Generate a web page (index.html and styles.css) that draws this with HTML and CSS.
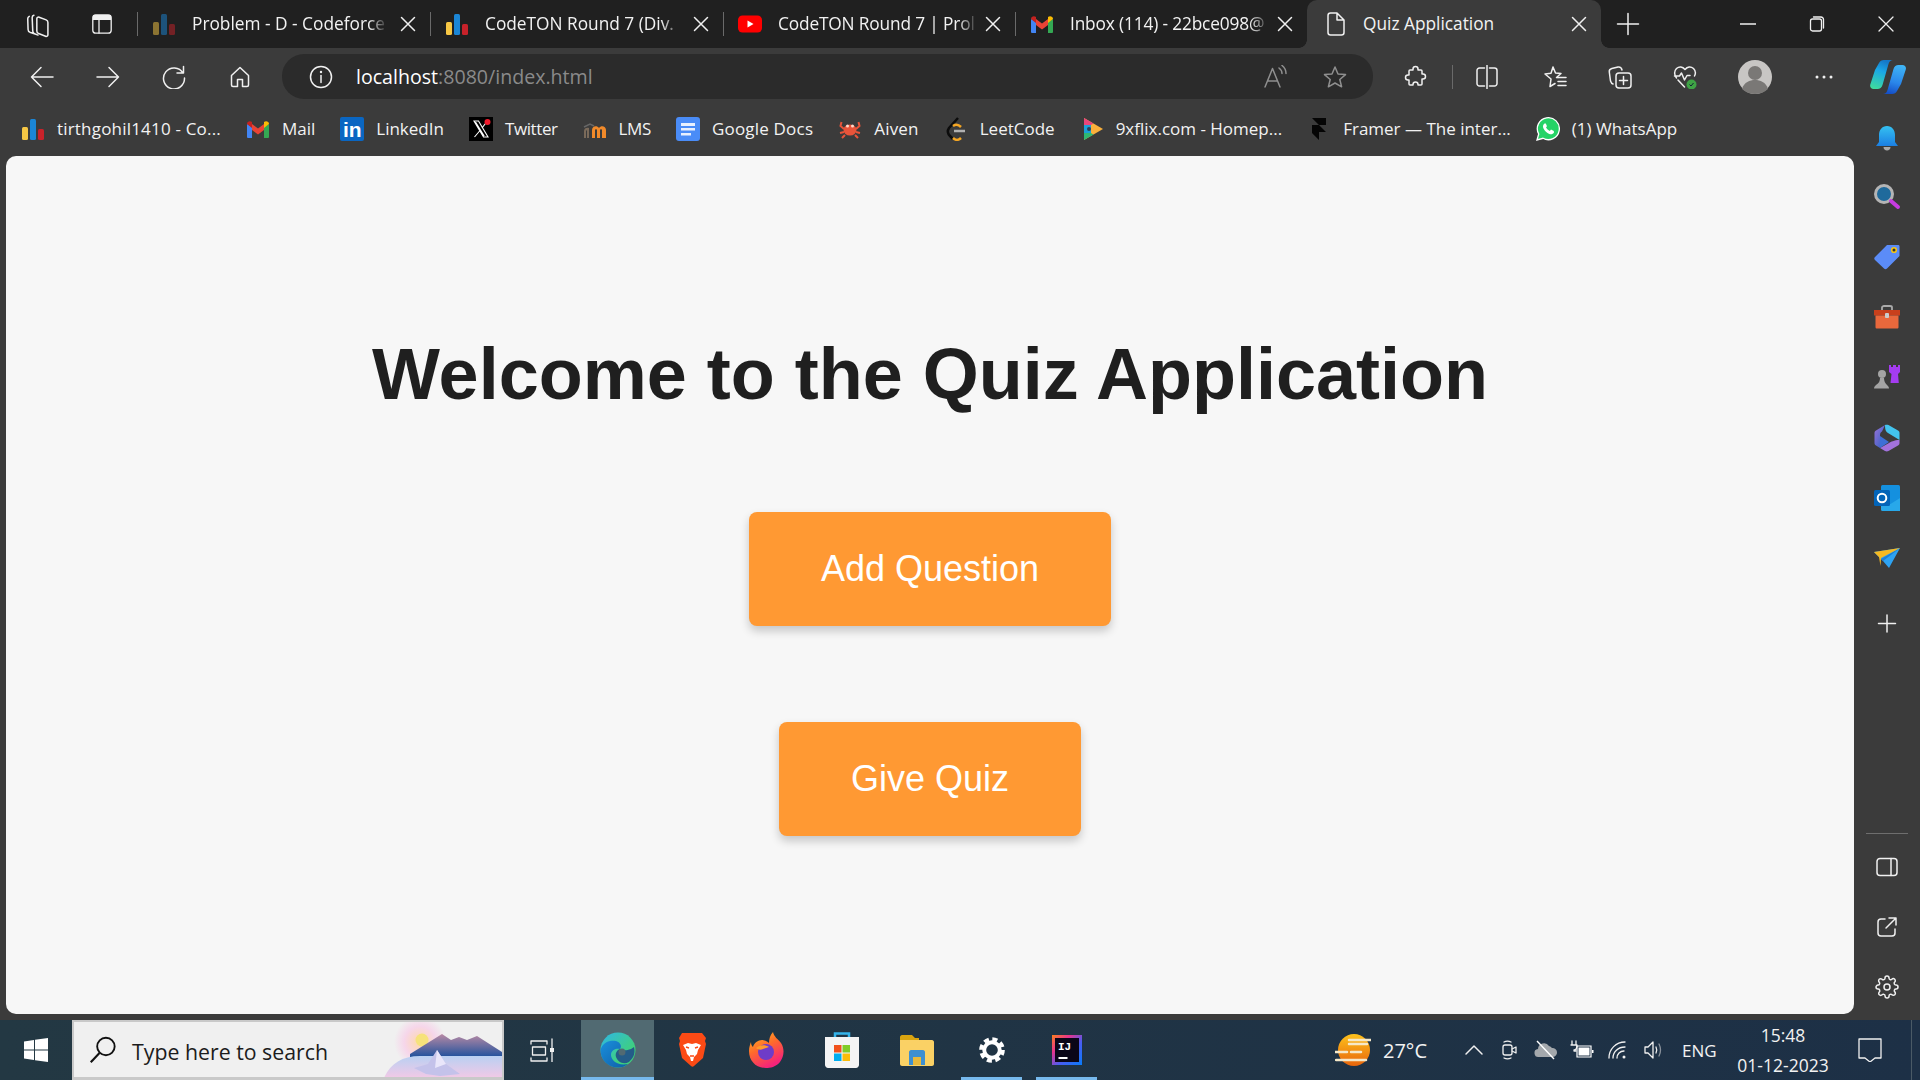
FILE: index.html
```html
<!DOCTYPE html>
<html lang="en">
<head>
<meta charset="utf-8">
<title>Quiz Application</title>
<link rel="stylesheet" href="styles.css">
</head>
<body>
<svg class="defs" aria-hidden="true">
  <defs>
    <symbol id="chart" viewBox="0 0 24 24"><rect x="1" y="10" width="6" height="13" rx="1.500" fill="#f7c744"/><rect x="9" y="2" width="6" height="21" rx="1.500" fill="#1b86d6"/><rect x="17" y="12" width="6" height="11" rx="1.500" fill="#c8222a"/></symbol>
    <symbol id="close" viewBox="0 0 24 24"><path class="line" d="M5.500 5.500l13 13M18.500 5.500l-13 13"/></symbol>
    <symbol id="gmail" viewBox="0 0 24 24"><path d="M1 7v13a1 1 0 0 0 1 1h4V10z" fill="#4285f4"/><path d="M23 7v13a1 1 0 0 1-1 1h-4V10z" fill="#34a853"/><path d="M6 13V7l6 4.500L18 7v6l-6 4.500z" fill="#ea4335"/><path d="M1 7c0-2.500 3-3.500 5-2v6L1 7z" fill="#c5221f"/><path d="M23 7c0-2.500-3-3.500-5-2v6l5-4z" fill="#fbbc04"/></symbol>
  </defs>
</svg>

<div class="tabbar">
  <div class="tab-tools">
    <span class="slot-64"><svg class="ic-l" viewBox="0 0 24 24"><path class="line thin" d="M9.500 20.500L5 19c-1-.4-1.500-1.200-1.500-2.200L3.200 7.500c0-1 .5-1.500 1.300-2M12 21.500l-3-1.200c-1-.4-1.500-1.200-1.500-2.200L7 6.500c0-1 .5-1.700 1.500-2"/><path class="line thin" d="M11 7.500c0-1 1-1.700 2-1.300l6 2.300c1 .4 1.500 1.200 1.500 2.200v10.500c0 1-1 1.700-2 1.300l-6-2.300c-1-.4-1.500-1.200-1.500-2.200z"/></svg></span>
    <span class="slot-64"><svg class="ic" viewBox="0 0 24 24"><rect class="line thin" x="2.800" y="2.800" width="18.400" height="18.400" rx="3"/><path class="solid" d="M3 3h18v5H3z"/><path class="line thin" d="M9 8v13"/></svg></span>
  </div>
  <div class="tab dim">
    <svg class="favicon" viewBox="0 0 24 24"><use href="#chart"/></svg>
    <span class="tab-title">Problem - D - Codeforce</span>
    <svg class="tab-close" viewBox="0 0 24 24"><use href="#close"/></svg>
  </div>
  <div class="tab">
    <svg class="favicon" viewBox="0 0 24 24"><use href="#chart"/></svg>
    <span class="tab-title">CodeTON Round 7 (Div.</span>
    <svg class="tab-close" viewBox="0 0 24 24"><use href="#close"/></svg>
  </div>
  <div class="tab narrow">
    <svg class="favicon" viewBox="0 0 24 24"><rect y="3.500" width="24" height="17" rx="4.500" fill="#f00"/><path d="M9.500 8.500v7l6-3.500z" fill="#fff"/></svg>
    <span class="tab-title">CodeTON Round 7 | Prol</span>
    <svg class="tab-close" viewBox="0 0 24 24"><use href="#close"/></svg>
  </div>
  <div class="tab narrow">
    <svg class="favicon" viewBox="0 0 24 24"><use href="#gmail"/></svg>
    <span class="tab-title">Inbox (114) - 22bce098@</span>
    <svg class="tab-close" viewBox="0 0 24 24"><use href="#close"/></svg>
  </div>
  <div class="tab active">
    <svg class="favicon" viewBox="0 0 24 24"><path class="line" d="M4 3.500a2.500 2.500 0 0 1 2.500-2.500H13l7 7v12.500a2.500 2.500 0 0 1-2.500 2.500h-11A2.500 2.500 0 0 1 4 20.500zM13 1v7h7"/></svg>
    <span class="tab-title">Quiz Application</span>
    <svg class="tab-close" viewBox="0 0 24 24"><use href="#close"/></svg>
  </div>
  <span class="new-tab"><svg class="ic" viewBox="0 0 24 24"><path class="line" d="M12 1.500v21M1.500 12h21"/></svg></span>
  <div class="win-controls">
    <span class="win-btn"><svg class="win-ic" viewBox="0 0 16 16"><path class="line thin" d="M0 8h16"/></svg></span>
    <span class="win-btn"><svg class="win-ic" viewBox="0 0 16 16"><rect class="line thin" x="1.500" y="3" width="11" height="12" rx="2"/><path class="line thin" d="M4.500 1H12a2.500 2.500 0 0 1 2.500 2.500V12"/></svg></span>
    <span class="win-btn"><svg class="win-ic" viewBox="0 0 16 16"><path class="line thin" d="M1 1l14 14M15 1L1 15"/></svg></span>
  </div>
</div>

<div class="toolbar">
  <div class="nav-tools">
    <span class="tool"><svg class="ic" viewBox="0 0 24 24"><path class="line" d="M23 12H1.500M11 2.500L1.500 12l9.500 9.500"/></svg></span>
    <span class="tool"><svg class="ic" viewBox="0 0 24 24"><path class="line" d="M1 12h21.500M13 2.500l9.500 9.500-9.500 9.500"/></svg></span>
    <span class="tool"><svg class="ic" viewBox="0 0 24 24"><path class="line" d="M21 8a10.500 10.500 0 1 0 1.500 5M21.500 1.500V8H15"/></svg></span>
    <span class="tool"><svg class="ic" viewBox="0 0 24 24"><path class="line" d="M9.500 21.500H5a1.500 1.500 0 0 1-1.500-1.500v-9.500L12 2.500l8.500 8V20a1.500 1.500 0 0 1-1.500 1.500h-4.500v-7h-5z"/></svg></span>
  </div>
  <div class="address">
    <svg class="ic" viewBox="0 0 24 24"><circle class="line" cx="12" cy="12" r="10.500"/><path class="line" d="M12 10.500v7"/><circle class="solid" cx="12" cy="7" r="1.200"/></svg>
    <span class="url"><span class="url-host">localhost</span>:8080/index.html</span>
    <svg class="ic read" viewBox="0 0 24 24"><path class="line grey" d="M2 22L9.500 3.500 17 22M4.500 16h10M16 3c2 1.500 3 3 3 5.500M19 .5c2.500 2 4 5 4 8"/></svg>
    <svg class="ic star" viewBox="0 0 24 24"><path class="line grey" d="M12 2l3 7 7.500.6-5.700 4.900 1.800 7.300L12 18l-6.600 3.800 1.800-7.300L1.500 9.600 9 9z"/></svg>
  </div>
  <span class="tool ext"><svg class="ic" viewBox="0 0 24 24"><path class="line" d="M10 4a2.500 2.500 0 0 1 5 0v1h3a1 1 0 0 1 1 1v3h1a2.500 2.500 0 0 1 0 5h-1v5a1 1 0 0 1-1 1h-3v-.5a2.500 2.500 0 0 0-5 0v.5H7a1 1 0 0 1-1-1v-4H5a2.500 2.500 0 0 1 0-5h1V6a1 1 0 0 1 1-1h3z"/></svg></span>
  <span class="tool-sep"></span>
  <span class="tool split"><svg class="ic" viewBox="0 0 24 24"><path class="line" d="M9.500 3H4.500A2.500 2.500 0 0 0 2 5.500v13A2.500 2.500 0 0 0 4.500 21h5M14.500 3h5A2.500 2.500 0 0 1 22 5.500v13a2.500 2.500 0 0 1-2.500 2.500h-5M12 .5v23"/></svg></span>
  <span class="tool favs"><svg class="ic" viewBox="0 0 24 24"><path class="line" d="M10 2l2.500 6 5.500.5-4.500 4 1.500 0M7 21.500l1-7.500-6-5 6-.7L10 2M7 21.500l5-3"/><path class="line" d="M15 12.500h8M15 16.500h8M15 20.500h8"/></svg></span>
  <span class="tool coll"><svg class="ic" viewBox="0 0 24 24"><rect class="line" x="8" y="8" width="15" height="15" rx="3"/><path class="line" d="M15.500 11.500v8M11.500 15.500h8M5 19c-1.500-.5-2-1.500-2.500-3L1.300 7c-.3-2 .8-3 2.500-3.500L10 2c2-.3 3.500.7 4 3"/></svg></span>
  <span class="tool health"><svg class="ic" viewBox="0 0 24 24"><path class="line" d="M3.500 13C1 10 1 6 3.500 3.500c2.800-2.500 6-2 8.500 1 2.500-3 5.700-3.500 8.500-1 2 2 2.300 5 1 7.500M1.500 11h5l2-3 3 7 2.500-4.500h3M5 15l6.500 7"/><circle cx="18.500" cy="19.500" r="5" fill="#3fa345"/><path d="M16.500 19.500l1.500 1.500 2.500-3" fill="none" stroke="#123" stroke-width="1"/></svg></span>
  <span class="tool avatar-slot"><svg class="avatar" viewBox="0 0 34 34"><circle cx="17" cy="17" r="17" fill="#c8c6c4"/><circle cx="17" cy="13" r="7" fill="#7a7876"/><path d="M4 29c2-7 8-9 13-9s11 2 13 9c-3 3-8 5-13 5s-10-2-13-5z" fill="#7a7876"/></svg></span>
  <span class="tool more"><svg class="ic" viewBox="0 0 24 24"><circle class="solid" cx="5" cy="12" r="1.500"/><circle class="solid" cx="12" cy="12" r="1.500"/><circle class="solid" cx="19" cy="12" r="1.500"/></svg></span>
  <span class="copilot"><svg class="copilot-ic" viewBox="0 0 36 36"><defs><linearGradient id="cp1" x1=".5" y1="0" x2=".2" y2="1"><stop offset="0" stop-color="#1578c8"/><stop offset=".35" stop-color="#1aa7e8"/><stop offset="1" stop-color="#3fdc9c"/></linearGradient><linearGradient id="cp2" x1=".6" y1="0" x2=".4" y2="1"><stop offset="0" stop-color="#3fb4f5"/><stop offset=".6" stop-color="#2a86ea"/><stop offset="1" stop-color="#1550c8"/></linearGradient></defs><path d="M9 4c1-2 2.500-3 5-3h9c-2 0-3.500 1-4.500 4l-6 21c-.8 2.500-2.500 4-5 4H3.500C1 30-.4 28 .3 25.500L5 11z" fill="url(#cp1)"/><path d="M27 32c-1 2-2.500 3-5 3h-9c2 0 3.500-1 4.500-4l6-21c.8-2.500 2.500-4 5-4h4c2.500 0 4 2 3.300 4.500L31 25z" fill="url(#cp2)"/></svg></span>
</div>

<div class="content">
  <div class="main-col">
    <nav class="bookmarks">
      <a class="bm sp-wide"><svg class="ic" viewBox="0 0 24 24"><use href="#chart"/></svg><span>tirthgohil1410 - Co...</span></a>
      <a class="bm"><svg class="ic" viewBox="0 0 24 24"><use href="#gmail"/></svg><span>Mail</span></a>
      <a class="bm"><svg class="ic" viewBox="0 0 24 24"><rect width="24" height="24" rx="2" fill="#0a66c2"/><text class="in" x="3" y="20">in</text></svg><span>LinkedIn</span></a>
      <a class="bm sp-tight"><svg class="ic" viewBox="0 0 24 24"><rect width="24" height="24" fill="#000"/><path d="M5 4h4.500L19 20h-4.500zM6.500 5l8.700 14M18 4.500L13 11M11 13.500L5.500 20" fill="none" stroke="#fff" stroke-width="1.100"/><circle cx="18.500" cy="5" r="3" fill="#f01a2c"/></svg><span>Twitter</span></a>
      <a class="bm sp-tight"><svg class="ic" viewBox="0 0 24 24"><path d="M9 21v-8c0-4 5-5 7-2 2-3 7-2 7 2v8h-4v-8c0-1-2-1-2 0v8h-3v-8c0-1-2-1-2 0v8z" fill="#f18a2a"/><path d="M1 21v-7c0-3 3-4 5-3v10H4v-7c0-1-1-1-1 0v7z" fill="#7a6a5a"/><path d="M1 10l6-3 4 2" fill="none" stroke="#666" stroke-width="1.500"/></svg><span>LMS</span></a>
      <a class="bm sp-soft"><svg class="ic" viewBox="0 0 24 24"><rect width="24" height="24" rx="3" fill="#4a8cf7"/><path d="M5 6h14v3H5zM5 11h14v2.500H5zM5 16h10v2.500H5z" fill="#e8f0fe"/></svg><span>Google Docs</span></a>
      <a class="bm sp-soft"><svg class="ic" viewBox="0 0 24 24"><ellipse cx="12" cy="13" rx="6.500" ry="5.500" fill="#e8543a"/><path d="M6 12L2.500 9l1-4M18 12l3.500-3-1-4M6 15l-4 1M18 15l4 1M7 18l-3 3M17 18l3 3" fill="none" stroke="#e8543a" stroke-width="2"/><circle cx="9.500" cy="9" r="1.500" fill="#ffd9c9"/><circle cx="14.500" cy="9" r="1.500" fill="#ffd9c9"/></svg><span>Aiven</span></a>
      <a class="bm"><svg class="ic" viewBox="0 0 24 24"><path d="M14 1L5 11c-2 3-1 6 1 8l3 3" fill="none" stroke="#0c0c0c" stroke-width="2.500"/><path d="M9 21c3 3 6 2 8 0M9 9c3-2 6-1 8 1" fill="none" stroke="#f5a623" stroke-width="2.500"/><path d="M10 14h11" stroke="#b0b0b0" stroke-width="2.500"/></svg><span>LeetCode</span></a>
      <a class="bm"><svg class="ic" viewBox="0 0 24 24"><path d="M4 1l19 11L4 23z" fill="#fbb03b"/><path d="M4 1l9.500 5.500L4 12z" fill="#e8457a"/><path d="M4 12v11l9.500-5.500z" fill="#2eb872"/><path d="M4 8l7 0v8H4z" fill="#1a9fd8"/><circle cx="9" cy="12" r="2" fill="#2b3f55"/></svg><span>9xflix.com - Homep...</span></a>
      <a class="bm"><svg class="ic" viewBox="0 0 24 24"><path d="M5 1h14v7h-7zM5 8h7l7 7h-7v8l-7-7z" fill="#050505"/></svg><span>Framer — The inter...</span></a>
      <a class="bm"><svg class="ic" viewBox="0 0 24 24"><path d="M1 23l1.700-6A11 11 0 1 1 7 21.300z" fill="#25d366" stroke="#fff" stroke-width="1.300"/><path d="M8.500 6.500c-1.500 1-2 3-1 5 1.200 2.500 3.300 4.500 5.800 5.500 2 .7 3.800 0 4.700-1.500l-.2-1.500-2.800-1.400-1.200 1.400c-1.600-.6-3-2-3.800-3.700l1-1.100L9.800 6.500z" fill="#fff"/></svg><span>(1) WhatsApp</span></a>
    </nav>
    <main class="page">
      <h1 class="title">Welcome to the Quiz Application</h1>
      <a class="action first">Add Question</a>
      <a class="action">Give Quiz</a>
    </main>
  </div>
  <aside class="sidebar">
    <span class="side-item"><svg class="ic-l" viewBox="0 0 28 28"><defs><linearGradient id="bell" x1="0" y1="0" x2="0" y2="1"><stop offset="0" stop-color="#35c1f1"/><stop offset="1" stop-color="#1b7fe3"/></linearGradient></defs><path d="M14 2c5 0 8 4 8 9v7l3 4H3l3-4v-7c0-5 3-9 8-9z" fill="url(#bell)"/><path d="M10.500 23h7c0 2-1.500 3.500-3.500 3.500s-3.500-1.500-3.500-3.500z" fill="#aaa"/></svg></span>
    <span class="side-item"><svg class="ic-l" viewBox="0 0 28 28"><circle cx="11" cy="10" r="8.500" fill="#1f6a9c" stroke="#b4b4b4" stroke-width="3"/><path d="M18 17l7 6" stroke="#c63ce0" stroke-width="4" stroke-linecap="round"/></svg></span>
    <span class="side-item"><svg class="ic-l" viewBox="0 0 28 28"><path d="M14 1h11c1 0 1.500.5 1.500 1.500V12L14 24.500c-1 1-2 1-3 0L2 16c-1-1-1-2 0-3z" fill="#5b8cf8"/><circle cx="21" cy="6" r="2.300" fill="#333" stroke="#f5c518" stroke-width="1.600"/></svg></span>
    <span class="side-item"><svg class="ic-l" viewBox="0 0 28 28"><path d="M9 6V3.500C9 2.500 10 2 11 2h6c1 0 2 .5 2 1.500V6" fill="none" stroke="#aaa" stroke-width="1.800"/><path d="M1 6h26v5.500H1z" fill="#c8401c"/><path d="M2.500 11.500h23V23c0 1-.5 1.500-1.500 1.500H4c-1 0-1.500-.5-1.500-1.500z" fill="#e9683c"/><rect x="12" y="9" width="4" height="5" rx="1" fill="#ccc"/></svg></span>
    <span class="side-item"><svg class="ic-l" viewBox="0 0 28 28"><path d="M16 1h2v2h2V1h3v2h2V1h2v7l-2 2 .8 9H17.500l1-9-2.500-2z" fill="#a43cf0"/><circle cx="9" cy="10" r="4" fill="#a4a4a4"/><path d="M7 14h4c0 3 1 5 3 7 1 1 2 2 2 3.500H1c0-1.500 1-2.500 2-3.500 3-2 4-4 4-7z" fill="#a4a4a4"/></svg></span>
    <span class="side-item"><svg class="ic-l" viewBox="0 0 28 28"><defs><linearGradient id="m1" x1="0" y1="0" x2="1" y2="1"><stop offset="0" stop-color="#9a72d8"/><stop offset="1" stop-color="#2c5fc4"/></linearGradient></defs><path d="M12 1L3 6.500C2 7 1.500 8 1.500 9v10c0 1 .5 2 1.500 2.500l4 2.500V11c0-2 1-3 2-3.500z" fill="url(#m1)"/><path d="M12 1c1-.5 2.500-.5 3.500 0L25 6.500c1 .5 1.500 1.500 1.500 2.500v7L15 9c-2-1-3-3-3-8z" fill="#43c4ee"/><path d="M26.500 16v3c0 1-.5 2-1.500 2.500L15.500 27c-1 .5-2.500.5-3.500 0l-5-3 9-5c2-1 5-3 10.500-3z" fill="#a272dc"/><path d="M7 24V12l9 6z" fill="#3d6fd6"/></svg></span>
    <span class="side-item"><svg class="ic-l" viewBox="0 0 28 28"><rect x="8" y="1" width="19" height="24" rx="1.500" fill="#1490df"/><path d="M8 14l9.500 6 9.500-6v13H9.500A1.500 1.500 0 0 1 8 25.500z" fill="#28a8ea"/><rect x="1" y="6" width="16" height="16" rx="1.500" fill="#0364b8"/><circle cx="9" cy="14" r="4.300" fill="none" stroke="#fff" stroke-width="2"/></svg></span>
    <span class="side-item"><svg class="ic-l" viewBox="0 0 28 28"><path d="M1 8l26-4-11 20-6-7z" fill="#2ea3f2"/><path d="M27 4L8 15l2 2z" fill="#1c7fd6"/><path d="M1 8l26-4L8 14l-.5 8-1.500-9z" fill="#f5b921"/></svg></span>
    <span class="side-item side-plus"><svg class="ic" viewBox="0 0 24 24"><path class="line" d="M12 3v17M3.500 11.500h17"/></svg></span>
    <span class="side-sep"></span>
    <span class="side-item"><svg class="ic" viewBox="0 0 24 24"><rect class="line" x="2" y="3.500" width="20" height="17" rx="3"/><path class="line" d="M16 3.500v17"/></svg></span>
    <span class="side-item"><svg class="ic" viewBox="0 0 24 24"><path class="line" d="M10 4H6a3 3 0 0 0-3 3v11a3 3 0 0 0 3 3h11a3 3 0 0 0 3-3v-4M14 3h7v7M21 3L11 13"/></svg></span>
    <span class="side-item"><svg class="ic" viewBox="0 0 24 24"><circle class="line" cx="12" cy="12" r="3"/><path class="line" d="M19.400 15a1.650 1.650 0 0 0 .33 1.820l.06.06a2 2 0 0 1 0 2.830 2 2 0 0 1-2.830 0l-.06-.06a1.650 1.650 0 0 0-1.820-.33 1.650 1.650 0 0 0-1 1.510V21a2 2 0 0 1-2 2 2 2 0 0 1-2-2v-.09A1.650 1.650 0 0 0 9 19.400a1.650 1.650 0 0 0-1.820.33l-.06.06a2 2 0 0 1-2.830 0 2 2 0 0 1 0-2.830l.06-.06a1.650 1.650 0 0 0 .33-1.820 1.650 1.650 0 0 0-1.510-1H3a2 2 0 0 1-2-2 2 2 0 0 1 2-2h.09A1.650 1.650 0 0 0 4.600 9a1.650 1.650 0 0 0-.33-1.820l-.06-.06a2 2 0 0 1 0-2.830 2 2 0 0 1 2.830 0l.06.06a1.650 1.650 0 0 0 1.820.33H9a1.650 1.650 0 0 0 1-1.510V3a2 2 0 0 1 2-2 2 2 0 0 1 2 2v.09a1.650 1.650 0 0 0 1 1.510 1.650 1.650 0 0 0 1.820-.33l.06-.06a2 2 0 0 1 2.830 0 2 2 0 0 1 0 2.830l-.06.06a1.650 1.650 0 0 0-.33 1.820V9a1.650 1.650 0 0 0 1.510 1H21a2 2 0 0 1 2 2 2 2 0 0 1-2 2h-.09a1.650 1.650 0 0 0-1.510 1z"/></svg></span>
  </aside>
</div>

<footer class="taskbar">
  <span class="start"><svg class="win-logo" viewBox="0 0 24 24"><path d="M0 3.400l10-1.400v9.500H0zM11 1.800L24 0v11.500H11zM0 12.500h10V22L0 20.600zM11 12.500h13V24l-13-1.800z" fill="#fff"/></svg></span>
  <div class="search">
    <svg class="search-ic" viewBox="0 0 24 24"><circle cx="14.500" cy="9" r="7.500" fill="none" stroke="#111" stroke-width="1.600"/><path d="M9 14.500L1.500 22.500" stroke="#111" stroke-width="1.800"/></svg>
    <span class="search-text">Type here to search</span>
    <svg class="search-art" viewBox="0 0 118 56"><defs><radialGradient id="glow" cx=".5" cy=".5" r=".5"><stop offset="0" stop-color="#ffd9a8"/><stop offset=".6" stop-color="#f6d6ea"/><stop offset="1" stop-color="#f0f0f0"/></radialGradient><linearGradient id="lake" x1="0" y1="0" x2="0" y2="1"><stop offset="0" stop-color="#b9d0f2"/><stop offset="1" stop-color="#f2c9e6"/></linearGradient><linearGradient id="mtn" x1="0" y1="0" x2="0" y2="1"><stop offset="0" stop-color="#b98aa5"/><stop offset="1" stop-color="#1a4f9c"/></linearGradient></defs><circle cx="36" cy="20" r="26" fill="url(#glow)"/><circle cx="38" cy="18" r="6.500" fill="#f6e27a"/><path d="M26 32L58 12l9 6 8-3 8 3 10-4 25 16v6H26z" fill="url(#mtn)"/><path d="M0 56C6 42 18 34 36 34h82v22z" fill="url(#lake)"/><path d="M30 46l14-4 9-14 9 14 14 10-20 2-14-2z" fill="#c4c2ea"/><path d="M53 28l9 14-11 4z" fill="#e9e6fa"/></svg>
  </div>
  <span class="task-item task-view"><svg class="ic" viewBox="0 0 24 24"><path class="line thin" d="M1 3h16M1 3v3M17 3v3M2.500 9h13v8h-13zM1 23h16M1 23v-3M17 23v-3M22 1v9M22 14v10"/><path class="solid" d="M20 10h4v4h-4z"/></svg></span>
  <span class="task-item current"><svg class="task-ic" viewBox="0 0 36 36"><defs><linearGradient id="edge1" x1="0" y1="0" x2="1" y2="1"><stop offset="0" stop-color="#2fb6e8"/><stop offset=".7" stop-color="#3fd07c"/></linearGradient><linearGradient id="edge2" x1="0" y1="0" x2="1" y2="1"><stop offset="0" stop-color="#1a8fdc"/><stop offset="1" stop-color="#0f5fa8"/></linearGradient></defs><circle cx="18" cy="18" r="17.500" fill="url(#edge1)"/><path d="M.5 18C3 9 11 8 16 9c5 1.500 6 6 4 8-3-1-8 0-9 5-.5 6 6 12 17 10-3 2.500-6 3.500-10 3.500C8 35.500.5 28 .5 18z" fill="url(#edge2)"/><path d="M20 17c5 3 12 0 14-2 2 8-2 12-5 15-6 3-11 0-13-5-1-4 1-7 4-8z" fill="#245c88"/><circle cx="22" cy="20" r="3.500" fill="#516a72"/></svg></span>
  <span class="task-item"><svg class="task-ic" viewBox="0 0 36 36"><path d="M8 1h20l4 5-1 3 1 3-3 14-9 8c-1 1-2 1-3 0l-9-8L5 12l1-3-1-3z" fill="#fb4a15"/><path d="M9 13l5-2 4 1 4-1 5 2-3 5-1 4-3 3-1 4h-2l-1-4-3-3-1-4z" fill="#fff"/><path d="M12 15l3 1M21 16l3-1M16 24h4" stroke="#fb4a15" stroke-width="1.500"/></svg></span>
  <span class="task-item"><svg class="task-ic" viewBox="0 0 36 36"><defs><linearGradient id="ff" x1="0" y1="0" x2=".5" y2="1"><stop offset="0" stop-color="#ffc21f"/><stop offset=".5" stop-color="#ff6a2b"/><stop offset="1" stop-color="#f5237a"/></linearGradient></defs><path d="M24 0c1 5 5 7 8 11 4 6 3 14-1 19-4 5-10 6-14 6C7 36 0 29 0 19c0-4 1-6 2-9 0 3 1 4 2 5 1-4 5-7 9-7 2 0 5 1 7 3 0-4 1-8 4-11z" fill="url(#ff)"/><circle cx="17" cy="20" r="8" fill="#6e3cc8"/><path d="M7 16c3-3 9-4 13-1l-6 2c-2 1-5 1-7-1z" fill="#ff9a2b"/></svg></span>
  <span class="task-item"><svg class="task-ic" viewBox="0 0 36 36"><path d="M11 6V1.500h14V6" fill="none" stroke="#35b4ea" stroke-width="2.500"/><path d="M1 5h34v28c0 1.500-1.500 3-3 3H4c-1.500 0-3-1.500-3-3z" fill="#f4f4f4"/><path d="M10 13h7.500v7.500H10z" fill="#f1511b"/><path d="M18.500 13H26v7.500h-7.500z" fill="#80cc28"/><path d="M10 21.500h7.500V29H10z" fill="#00adef"/><path d="M18.500 21.500H26V29h-7.500z" fill="#fbbc09"/></svg></span>
  <span class="task-item"><svg class="task-ic" viewBox="0 0 36 36"><path d="M1 5c0-1 1-2 2-2h10l3 3h4v8H1z" fill="#d9a410"/><path d="M1 8h32c1 0 2 1 2 2v22c0 1-1 2-2 2H3c-1 0-2-1-2-2z" fill="#fad165"/><path d="M10 33V20c0-1 1-2 2-2h12c1 0 2 1 2 2v13h-4v-8h-8v8z" fill="#3d8fd1"/><path d="M14 25h8v8h-8z" fill="#e8b93c"/></svg></span>
  <span class="task-item open"><svg class="gear" viewBox="0 0 36 36"><circle cx="18" cy="18" r="10" fill="none" stroke="#fff" stroke-width="5"/><circle cx="18" cy="18" r="14" fill="none" stroke="#fff" stroke-width="5" stroke-dasharray="6.500 4.500"/></svg></span>
  <span class="task-item open"><svg class="ij-ic" viewBox="0 0 30 30"><defs><linearGradient id="ij" x1="0" y1="0" x2="1" y2="1"><stop offset="0" stop-color="#fc801d"/><stop offset=".3" stop-color="#e8348c"/><stop offset=".6" stop-color="#4a5cf0"/><stop offset="1" stop-color="#087cfa"/></linearGradient></defs><rect width="30" height="30" fill="url(#ij)"/><rect x="3" y="3" width="24" height="24" fill="#0a0618"/><text class="ij" x="6" y="15">IJ</text><rect x="6.500" y="22" width="9" height="2" fill="#fff"/></svg></span>

  <div class="tray">
    <svg class="weather" viewBox="0 0 36 36"><defs><linearGradient id="sun" x1="0" y1="0" x2="0" y2="1"><stop offset="0" stop-color="#fdc21c"/><stop offset="1" stop-color="#e8650c"/></linearGradient></defs><circle cx="19" cy="18" r="16" fill="url(#sun)"/><path d="M14 8h22M14 12h18M0 20h12M16 20h10M1 28h30" stroke="#f5e8c8" stroke-width="2.500" stroke-linecap="round"/></svg>
    <span class="temp">27°C</span>
    <span class="tray-item chev"><svg class="tray-ic" viewBox="0 0 20 20"><path class="line" d="M2 14l8-8 8 8"/></svg></span>
    <span class="tray-item"><svg class="tray-ic" viewBox="0 0 20 20"><rect class="line thin" x="3" y="5" width="9" height="10" rx="2"/><path class="line thin" d="M12 9l4-2v6l-4-2M4 2c2-1 5-1 7 0M4 18c2 1 5 1 7 0"/></svg></span>
    <span class="tray-item"><svg class="tray-ic wide" viewBox="0 0 24 20"><path d="M5 17a4 4 0 0 1-1-8 6 6 0 0 1 11-3 5 5 0 0 1 3 2 4.500 4.500 0 0 1 1 9z" fill="#a4a8ac"/><path d="M3 1l17 18" stroke="#fff" stroke-width="1.400"/></svg></span>
    <span class="tray-item"><svg class="tray-ic wide" viewBox="0 0 24 20"><path class="line thin" d="M2 1v4M6 1v4M1 5h6c0 3-1 5-3 5v1h2"/><path d="M7 6h14v11H7z" fill="none" stroke="#fff" stroke-width="1.200"/><path d="M8.500 7.500h11v8h-11zM22 10h1.500v3H22z" fill="#fff"/></svg></span>
    <span class="tray-item"><svg class="tray-ic" viewBox="0 0 20 20"><path class="line thin" d="M1 18c0-9 7-16 16-16M5 18c0-6 5-11 12-11M9 18c0-4 3-7 7-7"/><circle class="solid" cx="16" cy="17" r="1.500"/></svg></span>
    <span class="tray-item"><svg class="tray-ic" viewBox="0 0 20 20"><path class="line thin" d="M1 7h3l5-5v16l-5-5H1zM12 7c1 2 1 4 0 6"/><path class="line thin fade" d="M15 4c2 4 2 8 0 12"/></svg></span>
    <span class="lang">ENG</span>
    <span class="clock"><span>15:48</span><span>01-12-2023</span></span>
    <span class="notif"><svg class="ic" viewBox="0 0 24 24"><path class="line thin" d="M1 1h22v19h-6l-5 4-5-4H1z"/></svg></span>
    <span class="show-desktop"></span>
  </div>
</footer>
</body>
</html>
```
FILE: styles.css
```css
* { box-sizing: border-box; }
html, body { margin: 0; height: 100%; }
body {
  width: 1920px;
  height: 1080px;
  overflow: hidden;
  display: flex;
  flex-direction: column;
  background: #3b3b3b;
  font-family: "Open Sans", "Noto Sans", sans-serif;
  color: #f2f2f2;
}
.defs { width: 0; height: 0; display: block; position: absolute; }
svg { display: block; flex: none; }
.ic { width: 24px; height: 24px; }
.ic-l { width: 28px; height: 28px; }
.line { fill: none; stroke: #f0f0f0; stroke-width: 1.500; stroke-linecap: round; stroke-linejoin: round; }
.line.thin { stroke-width: 1.300; }
.line.grey { stroke: #8f8f8f; }
.line.fade { stroke: #8a929c; }
.solid { fill: #f0f0f0; }

/* tab strip */
.tabbar { height: 48px; flex: none; display: flex; align-items: stretch; background: #202020; font-size: 17.300px; }
.tab-tools { display: flex; align-items: center; width: 137px; padding-left: 6px; }
.slot-64 { width: 64px; display: flex; justify-content: center; }
.tab { position: relative; width: 293px; display: flex; align-items: center; padding-left: 15px; padding-right: 10px; }
.tab.narrow { width: 292px; }
.tab::before { content: ""; position: absolute; left: 0; top: 12px; bottom: 12px; width: 1px; background: #6a6a6a; }
.tab.active { width: 294px; background: #3b3b3b; border-radius: 10px 10px 0 0; padding-left: 17px; }
.tab.active::before { left: -8px; top: auto; bottom: 0; width: 8px; height: 8px; background: radial-gradient(circle at 0 0, #202020 7.500px, #3b3b3b 8px); }
.tab.active::after { content: ""; position: absolute; right: -8px; bottom: 0; width: 8px; height: 8px; background: radial-gradient(circle at 100% 0, #202020 7.500px, #3b3b3b 8px); }
.tab.dim .favicon { opacity: .5; }
.favicon { width: 24px; height: 24px; margin-right: 16px; }
.tab.active .favicon { margin-right: 15px; }
.tab-title {
  flex: 1;
  min-width: 0;
  padding-bottom: 2px;
  white-space: nowrap;
  overflow: hidden;
  -webkit-mask-image: linear-gradient(to right, #000 90%, transparent 100%);
  mask-image: linear-gradient(to right, #000 90%, transparent 100%);
}
.tab.narrow .tab-title { letter-spacing: -.15px; }
.tab.active .tab-title { -webkit-mask-image: none; mask-image: none; }
.tab-close { width: 24px; height: 24px; margin-left: 8px; }
.tab.narrow .tab-close { margin-left: 3px; }
.new-tab { width: 54px; display: flex; align-items: center; justify-content: center; }
.win-controls { margin-left: auto; display: flex; align-items: center; width: 207px; }
.win-btn { width: 69px; display: flex; justify-content: center; }
.win-ic { width: 16px; height: 16px; }

/* toolbar */
.toolbar { height: 51px; flex: none; display: flex; align-items: center; padding-top: 6px; background: #3b3b3b; }
.nav-tools { display: flex; padding-left: 9px; }
.tool { width: 66px; display: flex; justify-content: center; align-items: center; flex: none; }
.address {
  width: 1091px;
  height: 45px;
  margin-left: 9px;
  display: flex;
  align-items: center;
  padding-left: 27px;
  background: #2b2b2b;
  border-radius: 22px;
  font-size: 19.600px;
}
.url { margin-left: 23px; color: #8a8a8a; }
.url-host { color: #fff; }
.read { margin-left: auto; }
.star { margin: 0 26px 0 36px; }
.ext { margin-left: 9px; }
.tool-sep { width: 1px; height: 24px; margin-left: 4px; background: #6a6a6a; flex: none; }
.split { margin-left: 1px; }
.favs { margin-left: 2px; }
.coll { width: 64px; }
.health { width: 65px; }
.avatar-slot { margin-left: 5px; }
.more { margin-left: 3px; }
.avatar { width: 34px; height: 40px; }
.copilot { width: 61px; display: flex; justify-content: center; }
.copilot-ic { width: 36px; height: 36px; }

/* content */
.content { flex: 1; min-height: 0; display: flex; }
.main-col { flex: 1; min-width: 0; display: flex; flex-direction: column; }
.bookmarks { height: 57px; flex: none; display: flex; align-items: center; gap: 25px; padding: 2px 0 0 21px; font-size: 17px; white-space: nowrap; }
.bm { display: flex; align-items: center; gap: 12px; }
.sp-wide span { letter-spacing: .19px; }
.sp-tight span { letter-spacing: -.4px; }
.sp-soft span { letter-spacing: .2px; }
.in { font: 700 21px "Liberation Sans", sans-serif; fill: #fff; }
.page {
  flex: 1;
  margin: 0 0 6px 6px;
  background: #f7f7f7;
  border-radius: 10px;
  display: flex;
  flex-direction: column;
  align-items: center;
  padding-top: 176px;
  font-family: "Liberation Sans", Arial, sans-serif;
}
.title { margin: 0 0 96px; font-size: 72px; line-height: 84px; font-weight: 700; color: #1f1f1f; }
.action {
  display: block;
  padding: 36px 72px;
  font-size: 36px;
  line-height: 42px;
  color: #fff;
  background: #ff9933;
  border-radius: 8px;
  box-shadow: 0 5px 10px rgba(0, 0, 0, .2);
}
.action.first { margin-bottom: 96px; }

/* sidebar */
.sidebar { width: 66px; flex: none; display: flex; flex-direction: column; align-items: center; padding: 9px 0 3px; }
.side-item { width: 66px; height: 60px; flex: none; display: flex; align-items: center; justify-content: center; }
.side-plus { margin-top: 6px; }
.side-sep { width: 42px; height: 1px; margin-top: auto; margin-bottom: 3px; background: #6e6e6e; flex: none; }

/* taskbar */
.taskbar { height: 60px; flex: none; display: flex; align-items: stretch; background: linear-gradient(to right, #233843, #1d3046); }
.start { width: 72px; display: flex; align-items: center; justify-content: center; }
.win-logo { width: 24px; height: 24px; }
.search {
  width: 432px;
  display: flex;
  align-items: center;
  background: #f0f0f0;
  border: 2px solid #c9c9c9;
  border-bottom-width: 3px;
  overflow: hidden;
  color: #1c1c1c;
}
.search-ic { width: 28px; height: 28px; margin-left: 15px; }
.search-text { margin-left: 15px; padding-top: 3px; font-size: 21.300px; }
.search-art { width: 118px; height: 56px; margin-left: auto; }
.task-item { position: relative; width: 75px; display: flex; align-items: center; justify-content: center; }
.task-view { margin-right: 2px; }
.current { width: 73px; background: #516a72; }
.task-ic { width: 36px; height: 36px; }
.gear { width: 28px; height: 28px; }
.ij-ic { width: 30px; height: 30px; }
.current::after, .open::after { content: ""; position: absolute; bottom: 0; height: 3px; background: #76b9ed; }
.current::after { left: 0; right: 0; }
.open::after { left: 7px; right: 7px; }
.ij { font: 700 11px "Liberation Mono", monospace; fill: #fff; }
.tray { margin-left: auto; display: flex; align-items: center; }
.weather { width: 36px; height: 36px; }
.temp { margin-left: 12px; width: 43px; font-size: 20px; white-space: nowrap; }
.tray-item { width: 36px; display: flex; justify-content: center; }
.chev { margin-left: 30px; }
.tray-ic { width: 20px; height: 20px; }
.tray-ic.wide { width: 24px; }
.lang { width: 34px; margin-left: 10px; font-size: 17px; }
.clock { width: 100px; margin-left: 17px; display: flex; flex-direction: column; align-items: center; gap: 7px; font-size: 17.500px; line-height: 23px; }
.notif { width: 74px; display: flex; justify-content: center; }
.show-desktop { width: 1px; height: 60px; margin-left: 4px; margin-right: 8px; background: #4a5a66; }
```
